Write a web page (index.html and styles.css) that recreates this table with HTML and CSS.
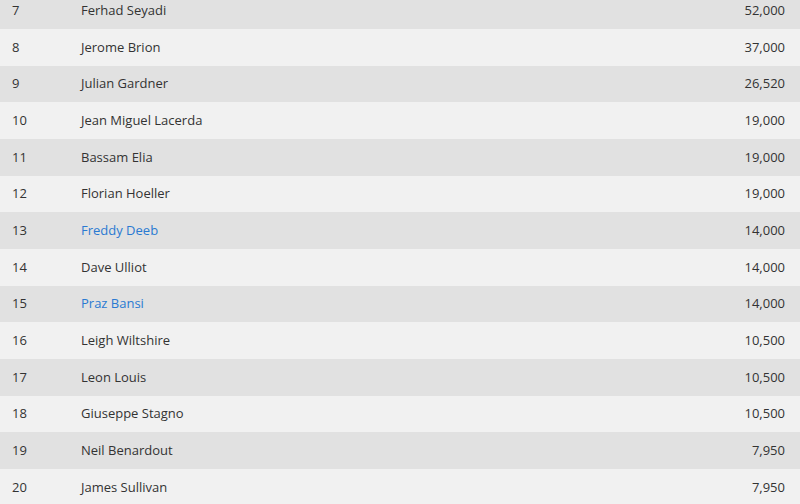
FILE: index.html
```html
<!DOCTYPE html>
<html>
<head>
<meta charset="utf-8">
<link rel="stylesheet" href="styles.css">
</head>
<body>
<table class="results">
<colgroup><col class="c-pos"><col class="c-name"><col class="c-amt"></colgroup>
<tbody>
<tr class="dark"><td class="pos">7</td><td class="name">Ferhad Seyadi</td><td class="amt">52,000</td></tr>
<tr class="light"><td class="pos">8</td><td class="name">Jerome Brion</td><td class="amt">37,000</td></tr>
<tr class="dark"><td class="pos">9</td><td class="name">Julian Gardner</td><td class="amt">26,520</td></tr>
<tr class="light"><td class="pos">10</td><td class="name">Jean Miguel Lacerda</td><td class="amt">19,000</td></tr>
<tr class="dark"><td class="pos">11</td><td class="name">Bassam Elia</td><td class="amt">19,000</td></tr>
<tr class="light"><td class="pos">12</td><td class="name">Florian Hoeller</td><td class="amt">19,000</td></tr>
<tr class="dark"><td class="pos">13</td><td class="name"><a href="#" class="player">Freddy Deeb</a></td><td class="amt">14,000</td></tr>
<tr class="light"><td class="pos">14</td><td class="name">Dave Ulliot</td><td class="amt">14,000</td></tr>
<tr class="dark"><td class="pos">15</td><td class="name"><a href="#" class="player">Praz Bansi</a></td><td class="amt">14,000</td></tr>
<tr class="light"><td class="pos">16</td><td class="name">Leigh Wiltshire</td><td class="amt">10,500</td></tr>
<tr class="dark"><td class="pos">17</td><td class="name">Leon Louis</td><td class="amt">10,500</td></tr>
<tr class="light"><td class="pos">18</td><td class="name">Giuseppe Stagno</td><td class="amt">10,500</td></tr>
<tr class="dark"><td class="pos">19</td><td class="name">Neil Benardout</td><td class="amt">7,950</td></tr>
<tr class="light"><td class="pos">20</td><td class="name">James Sullivan</td><td class="amt">7,950</td></tr>
</tbody>
</table>
</body>
</html>
```

FILE: styles.css
```css
html, body {
  margin: 0;
  padding: 0;
  background: #f1f1f1;
  overflow: hidden;
}
.results {
  width: 100%;
  table-layout: fixed;
  border-collapse: collapse;
  margin-top: -7.67px;
  font-family: "Open Sans", sans-serif;
  font-size: 13px;
  color: #333333;
}
.c-pos { width: 81px; }
.c-amt { width: 200px; }
.results td {
  height: 36.667px;
  padding: 0 0 1px 0;
  vertical-align: middle;
  line-height: 18px;
  box-sizing: border-box;
}
.dark { background: #e1e1e1; }
.light { background: #f1f1f1; }
.results td.pos { padding-left: 12px; }
.name { text-align: left; }
.results td.amt {
  text-align: right;
  padding-right: 15px;
}
.player {
  color: #2a7ad2;
  text-decoration: none;
}
```
